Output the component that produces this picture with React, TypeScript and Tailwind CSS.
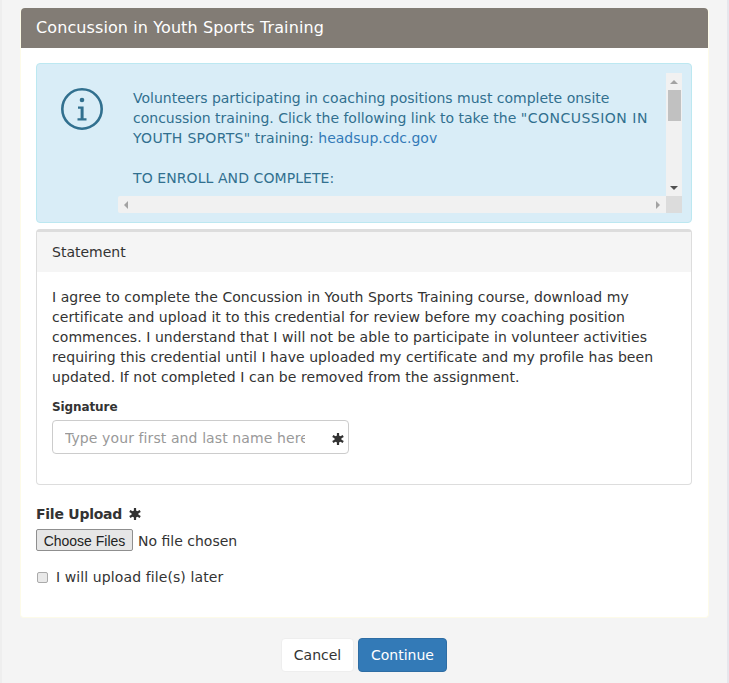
import React from 'react';

function Asterisk({ className }: { className?: string }) {
  return (
    <svg viewBox="0 0 12 12" className={className} fill="none" stroke="currentColor" strokeWidth="2.2">
      <path d="M6 0v12M.8 3l10.400 6M11.200 3L.8 9" />
      <circle cx="6" cy="6" r="3.400" fill="currentColor" stroke="none" />
    </svg>
  );
}

export default function App() {
  return (
    <div className="h-[683px] w-[729px] overflow-hidden border-x-2 border-l-[#eeeeee] border-r-[#e6e6ec] bg-[#f4f4f4] pl-[18px] font-['DejaVu_Sans',sans-serif] text-[14px] leading-[20px] text-[#333333]">
      <div className="w-[689px] pt-[8px]">
        {/* CARD */}
        <div className="h-[610px] rounded-[4px] border-x border-b border-[#fdfbe9] bg-white">
          <div className="flex h-[40px] items-center rounded-t-[4px] bg-[#827c75] pl-[15px] text-[16px] tracking-[0.1px] text-white">
            Concussion in Youth Sports Training
          </div>

          <div className="pt-[15px] pr-[16px] pl-[15px]">
            {/* ALERT */}
            <div className="flex h-[160px] rounded-[4px] border border-[#bce8f1] bg-[#d9edf7] pt-[9px] pr-[9px] text-[#31708f]">
              <div className="flex w-[81px] shrink-0 justify-center pt-[15px] pl-[9px]">
                <svg viewBox="0 0 42 42" className="h-[42px] w-[42px]" fill="none">
                  <circle cx="21" cy="21" r="19.700" stroke="#31708f" strokeWidth="2.600" />
                  <circle cx="21" cy="12" r="2.300" fill="#31708f" />
                  <path d="M17 18.500h5.600v11.800h2.900v2.200H16.500v-2.200h3.100v-9.600H17z" fill="#31708f" />
                </svg>
              </div>
              <div className="grid h-[140px] w-[564px] grid-cols-[548px_16px] grid-rows-[123px_17px]">
                <div className="overflow-hidden whitespace-nowrap pt-[15px] pl-[15px]">
                  <p>Volunteers participating in coaching positions must complete onsite</p>
                  <p>
                    concussion training. Click the following link to take the <span className="tracking-[0.5px]">"CONCUSSION IN</span>
                  </p>
                  <p>
                    <span className="tracking-[0.3px]">YOUTH SPORTS"</span> training: <a className="text-[#337ab7]">headsup.cdc.gov</a>
                  </p>
                  <p className="mt-[20px] tracking-[0.08px]">TO ENROLL AND COMPLETE:</p>
                </div>
                <div className="flex flex-col items-center bg-[#f1f1f1]">
                  <div className="flex h-[17px] items-center justify-center">
                    <div className="h-0 w-0 border-x-[4px] border-b-[4px] border-x-transparent border-b-[#a3a3a3]" />
                  </div>
                  <div className="h-[31px] w-[13px] bg-[#c1c1c1]" />
                  <div className="flex-1" />
                  <div className="flex h-[17px] items-center justify-center">
                    <div className="h-0 w-0 border-x-[4px] border-t-[4px] border-x-transparent border-t-[#505050]" />
                  </div>
                </div>
                <div className="flex items-center justify-between rounded-l-[2px] bg-[#f1f1f1] px-[6px]">
                  <div className="h-0 w-0 border-y-[4px] border-r-[4px] border-y-transparent border-r-[#a3a3a3]" />
                  <div className="h-0 w-0 border-y-[4px] border-l-[4px] border-y-transparent border-l-[#a3a3a3]" />
                </div>
                <div className="bg-[#dcdcdc]" />
              </div>
            </div>

            {/* STATEMENT */}
            <div className="mt-[6px] h-[256px] rounded-[4px] border border-t-[3px] border-[#dddddd] bg-white">
              <div className="flex h-[40px] items-center bg-[#f5f5f5] pl-[15px]">Statement</div>
              <div className="px-[15px] pt-[15px]">
                <p className="tracking-[0.06px]">
                  I agree to complete the Concussion in Youth Sports Training course, download my certificate and upload it to this credential for review before my coaching position commences. I understand that I will not be able to participate in volunteer activities requiring this credential until I have uploaded my certificate and my profile has been updated. If not completed I can be removed from the assignment.
                </p>
                <label className="mt-[10px] block text-[12px] leading-[20px] font-bold tracking-[-0.1px]">Signature</label>
                <div className="relative mt-[3px] h-[34px] w-[297px]">
                  <input
                    type="text"
                    placeholder="Type your first and last name here"
                    className="h-full w-[253px] rounded-[4px] bg-transparent pt-[8px] pb-[6px] pl-[13px] tracking-[0.1px] outline-none placeholder:text-[#999999]"
                  />
                  <div className="pointer-events-none absolute inset-0 rounded-[4px] border border-[#cccccc]" />
                  <Asterisk className="absolute top-[13px] right-[5px] h-[12px] w-[12px] text-[#333333]" />
                </div>
              </div>
            </div>

            {/* FILE UPLOAD */}
            <div className="mt-[19px] flex items-center gap-[7px] font-bold tracking-[-0.25px]">
              File Upload
              <Asterisk className="h-[12px] w-[12px] text-[#333333]" />
            </div>
            <input
              type="file"
              multiple
              className="mt-[5px] block h-[22px] w-[300px] text-[14px] leading-[22px] file:mr-[5px] file:h-[22px] file:w-[97px] file:rounded-[2px] file:border file:border-[#8f8f8f] file:bg-[#e6e6e6] file:font-['Liberation_Sans',sans-serif] file:text-[14px] file:text-[#222222]"
            />
            <label className="mt-[16px] flex items-center gap-[8px] tracking-[0.1px]">
              <input type="checkbox" className="ml-[1px] h-[11px] w-[11px] appearance-none rounded-[2px] border border-[#aaaaaa] bg-[#e9e9e9]" />
              I will upload file(s) later
            </label>
          </div>
        </div>

        {/* BUTTONS */}
        <div className="mt-[20px] flex justify-center gap-[4px] pr-px">
          <button className="h-[34px] w-[73px] rounded-[4px] border border-[#eeeeee] bg-white">Cancel</button>
          <button className="h-[34px] w-[89px] rounded-[4px] border border-[#2e6da4] bg-[#337ab7] text-white">Continue</button>
        </div>
      </div>
    </div>
  );
}
